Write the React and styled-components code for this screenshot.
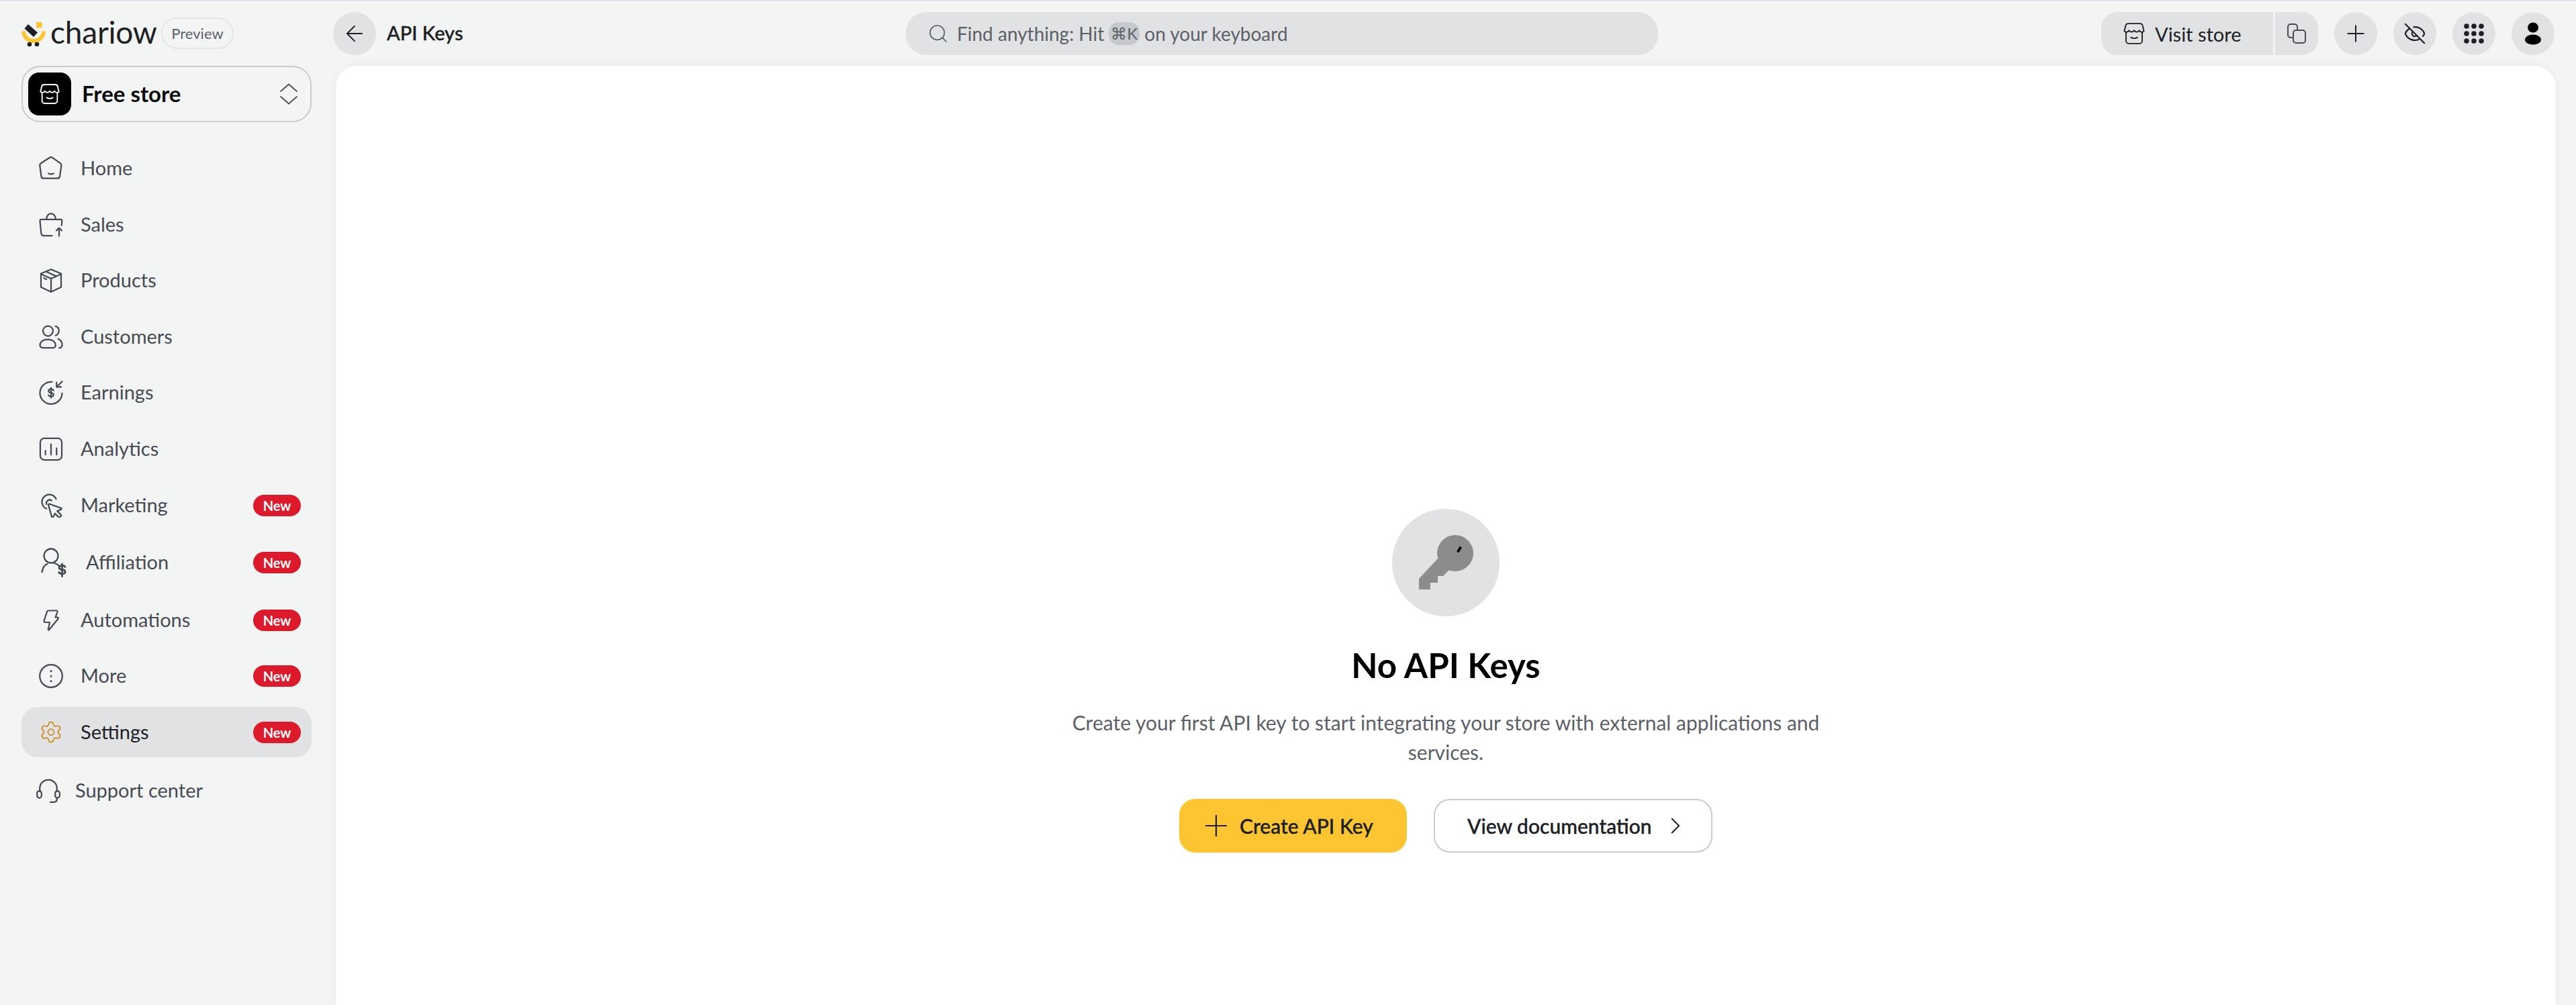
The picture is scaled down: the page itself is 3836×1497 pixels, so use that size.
import styled, { createGlobalStyle } from 'styled-components'
import { ArrowLeft, ChevronRight, EyeOff, Plus, Search, Settings } from 'lucide-react'

const FONT = `Lato, "Noto Sans", sans-serif`

const GlobalStyle = createGlobalStyle`
  * { box-sizing: border-box; }
  html, body { margin: 0; padding: 0; height: 100%; overflow: hidden; }
  body { background: #f3f5f4; font-family: ${FONT}; }
`

const Line = ({ w = 24, h = 24, children, ...rest }) => (
  <svg
    width={w}
    height={h}
    viewBox={`0 0 ${w} ${h}`}
    fill="none"
    stroke="currentColor"
    strokeWidth="1.5"
    strokeLinecap="round"
    strokeLinejoin="round"
    {...rest}
  >
    {children}
  </svg>
)

const Box = ({ children, ...rest }) => (
  <svg
    width="36"
    height="36"
    viewBox="0 0 24 24"
    fill="none"
    stroke="currentColor"
    strokeWidth="1.5"
    strokeLinecap="round"
    strokeLinejoin="round"
    {...rest}
  >
    {children}
  </svg>
)

const HomeIcon = () => (
  <Box>
    <path d="M10.6 1.2a2.4 2.4 0 0 1 2.8 0l7.8 5.6a2.4 2.4 0 0 1 1 2.4l-1.5 10.6a2.4 2.4 0 0 1-2.4 2H4.7a2.4 2.4 0 0 1-2.4-2L.9 9.2a2.4 2.4 0 0 1 1-2.4Z" />
    <path d="M9.5 17c1.5.7 3.5.7 5 0" />
  </Box>
)

const SalesIcon = () => (
  <Box>
    <path d="M7.5 6.5C7.5 3 9.5.8 12 .8s4.5 2.2 4.5 5.7" />
    <path d="M13 22.8H5c-1.5 0-2.6-1-2.8-2.5L1 8c0-.9.7-1.5 1.5-1.5h19c.8 0 1.5.6 1.4 1.5l-.4 4.5" />
    <path d="M20 23v-8m-2.6 2.6L20 15l2.6 2.6" />
  </Box>
)

const ProductsIcon = () => (
  <Box>
    <path d="M12 .8 22 5v13.5l-10 4.7-10-4.7V5Z" />
    <path d="M2 5.5 12 10l10-4.5M12 10v13" />
    <path d="M7 3 17 7.5M5 9.5l2.5 1.2" />
  </Box>
)

const CustomersIcon = () => (
  <Box>
    <circle cx="9" cy="6" r="5" />
    <path d="M16.5 1.3c2 .6 3.3 2.4 3.3 4.5s-1.3 3.9-3.3 4.7" />
    <path d="M5 22.8h8.5c2 0 3-1.2 3-2.8 0-3.4-3.4-5.6-7.7-5.6S1 16.6 1 20c0 1.6 1.5 2.8 4 2.8Z" />
    <path d="M19 13.8c2.5 1 4 3.2 4 6 0 1.8-1.2 3-3 3" />
  </Box>
)

const EarningsIcon = () => (
  <Box>
    <path d="M13 1.3A11 11 0 1 0 23 12.5" />
    <path d="M23 .8 17.5 6.3M17.5 1.8v4.5H22" />
    <path d="M14.5 9.8c-.4-.9-1.3-1.4-2.5-1.4-1.5 0-2.5.8-2.5 1.8s1 1.7 2.5 1.9 2.5.9 2.5 1.9-1 1.8-2.5 1.8c-1.2 0-2.1-.5-2.5-1.4M12 7v10" />
  </Box>
)

const AnalyticsIcon = () => (
  <Box>
    <rect x="1.3" y="1.3" width="21.4" height="21.4" rx="4" />
    <path d="M6.5 13.5v4M12 7v10.5M17.5 11v6.5" />
  </Box>
)

const MarketingIcon = () => (
  <Box>
    <path d="M7.5 15.2A7.3 7.3 0 1 1 17 5.5" />
    <path d="M7.5 10.8A3.3 3.3 0 0 1 12.5 7" />
    <path d="M10.5 10.5 22 14.6c.6.2.6 1 0 1.3l-3.8 1.7 3.5 3.5c.4.4.4.9 0 1.3l-1 1c-.4.4-.9.4-1.3 0l-3.5-3.5-1.8 3.6c-.3.6-1.1.5-1.3-.1L9.4 11.6c-.2-.7.4-1.3 1.1-1.1Z" />
  </Box>
)

const AffiliationIcon = () => (
  <Line w={40} h={44} strokeWidth="2.3">
    <circle cx="16" cy="12" r="10.5" />
    <path d="M2.5 36c1-6 3.8-10.3 8-12M21 23c2 .5 4 1.4 6 3" />
    <path d="M37 28.5c-.6-1.3-2.2-2-4.500-2-2.800 0-4.500 1.100-4.500 2.900s1.800 2.700 4.500 3.100 4.700 1.300 4.700 3.200-2 3-4.700 3c-2.400 0-4-.8-4.700-2.200M32.500 24v18.500" strokeWidth="2.8" />
  </Line>
)

const AutomationsIcon = () => (
  <Line w={24} h={32} strokeWidth="2.2">
    <path d="M8.500 1.500H20c1.300 0 1.900 1 1.500 2.200L18.500 11.500h3c1.300 0 1.800 1.200 1 2.200L9.300 30c-.7.8-1.700.2-1.500-.7L10 19H3.500C2 19 1.200 18 1.600 16.600L6 3.200C6.400 2.100 7.200 1.500 8.500 1.500Z" />
  </Line>
)

const MoreIcon = () => (
  <Box>
    <circle cx="12" cy="12" r="11.2" />
    <path d="M12 7v.1M12 12v.1M12 17v.1" strokeWidth="2" />
  </Box>
)

const SupportIcon = () => (
  <Box>
    <path d="M3.5 12.5V9.5a8.5 8.5 0 0 1 17 0v3" />
    <rect x=".8" y="12" width="4.4" height="7" rx="2.2" />
    <rect x="18.8" y="12" width="4.4" height="7" rx="2.2" />
    <path d="M20.5 19v1c0 2-1.3 3.2-3.2 3.2H14" />
  </Box>
)

const StoreIcon = ({ size = 32, sw = 1.4 }) => (
  <svg width={size} height={size} viewBox="0 0 24 24" fill="none" stroke="currentColor" strokeWidth={sw} strokeLinecap="round" strokeLinejoin="round">
    <path d="M3.5 11v8.5a3 3 0 0 0 3 3h11a3 3 0 0 0 3-3V11" />
    <path d="M6 1.500h12a3 3 0 0 1 3 2.500l1.300 5.500c-1.500 1.500-3.800 1.200-5-.8-1 2-4 2.200-5.300 0-1.300 2.200-4.300 2-5.300 0-1.200 2-3.500 2.300-5 .8L3 4a3 3 0 0 1 3-2.500Z" />
    <path d="M8.5 16c2.200 1.300 4.800 1.300 7 0" />
  </svg>
)

const LogoMark = () => (
  <svg width="36" height="42" viewBox="0 0 36 42">
    <path d="M3 17.5a15 14.5 0 0 0 30 0" fill="none" stroke="#fec532" strokeWidth="6" />
    <rect x="22" y="4" width="8.5" height="8.5" fill="#fec532" />
    <path d="M9.5 7.500 10 7.300 24 19.500 18 26 4.500 13.500Z" fill="#1d1f24" />
    <circle cx="12" cy="37" r="3.3" fill="#1d1f24" />
    <circle cx="23" cy="37" r="3.3" fill="#1d1f24" />
  </svg>
)

const KeyIcon = () => (
  <svg width="160" height="160" viewBox="0 0 160 160">
    <circle cx="94" cy="66" r="27" fill="#8c8c8c" />
    <path d="M68 74 40 104v16h17v-10h11v-10h8l12-12Z" fill="#8c8c8c" />
    <path d="M98.5 63l3-5" stroke="#000" strokeWidth="4" strokeLinecap="round" />
  </svg>
)

const Page = styled.div`
  display: grid;
  grid-template-columns: 496px 1fr;
  height: 100vh;
  border-top: 2px solid #e2e3ee;
  overflow: hidden;
`

const Sidebar = styled.aside`
  padding: 24px 32px 0;
  display: flex;
  flex-direction: column;
`

const Brand = styled.div`
  height: 47px;
  display: flex;
  align-items: center;
  gap: 7px;
  margin-bottom: 25px;
`

const Wordmark = styled.span`
  font-size: 46px;
  line-height: 47px;
  color: #1d1f24;
  letter-spacing: -0.2px;
  width: 158px;
  margin-top: -4px;
`

const PreviewPill = styled.span`
  width: 108px;
  height: 47px;
  border: 2px solid #e4e5e7;
  border-radius: 24px;
  display: flex;
  align-items: center;
  justify-content: center;
  font-size: 22px;
  color: #5c6068;
`

const StoreSelect = styled.div`
  height: 84px;
  border: 2px solid #c8cad0;
  border-radius: 28px;
  padding: 0 18px 0 8px;
  display: flex;
  align-items: center;
  color: #4b4e55;
`

const StoreBadge = styled.div`
  width: 64px;
  height: 64px;
  border-radius: 16px;
  background: #000;
  color: #fff;
  display: flex;
  align-items: center;
  justify-content: center;
  flex: none;
`

const StoreName = styled.span`
  flex: 1;
  margin: -3px 0 0 16px;
  font-size: 33px;
  font-weight: 700;
  color: #0a0a0a;
`

const Nav = styled.nav`
  display: flex;
  flex-direction: column;
  gap: 8.6px;
  margin-top: 31.5px;
`

const NavRow = styled.a`
  height: ${p => p.$height || 75}px;
  padding: 0 16px 0 ${p => p.$inset || 26}px;
  border-radius: 24px;
  display: flex;
  align-items: center;
  background: ${p => (p.$active ? '#e1e2e4' : 'transparent')};
  color: ${p => (p.$active ? '#1d1f24' : '#474a52')};
  font-size: 29px;
`

const NavIcon = styled.span`
  width: ${p => p.$width || 36}px;
  margin-right: ${p => p.$space ?? 26}px;
  display: flex;
  justify-content: center;
  flex: none;
  color: ${p => p.$color || '#474a52'};
`

const NavLabel = styled.span`
  flex: 1;
  margin-top: -3px;
`

const NewBadge = styled.span`
  width: 71px;
  height: 32px;
  border-radius: 16px;
  background: #dc1a2c;
  color: #fff;
  font-size: 20px;
  font-weight: 700;
  display: flex;
  align-items: center;
  justify-content: center;
`

const Main = styled.main`
  display: flex;
  flex-direction: column;
  min-width: 0;
`

const Header = styled.header`
  display: grid;
  grid-template-columns: 853px 1120px 1fr;
  align-items: center;
  height: 64px;
  margin: 16px 32px 16px 0;
  flex: none;
`

const HeaderLeft = styled.div`
  display: flex;
  align-items: center;
  gap: 16px;
`

const RoundButton = styled.button`
  width: 64px;
  height: 64px;
  border: 0;
  padding: 0;
  border-radius: 50%;
  background: #e1e2e4;
  color: #1d1f24;
  display: flex;
  align-items: center;
  justify-content: center;
  flex: none;
`

const PageTitle = styled.h1`
  margin: -3px 0 0;
  font-size: 29px;
  font-weight: 500;
  -webkit-text-stroke: 0.4px #1d1f24;
  color: #1d1f24;
`

const SearchBar = styled.div`
  height: 64px;
  border-radius: 30px;
  background: #e1e2e4;
  padding: 0 32px;
  display: flex;
  align-items: center;
  color: #5c6068;
  font-size: 28px;
`

const SearchText = styled.span`
  margin-left: 12px;
`

const Kbd = styled.kbd`
  width: 46px;
  height: 34px;
  margin: 0 7px;
  border-radius: 15px;
  background: #c6c9ce;
  display: inline-flex;
  align-items: center;
  justify-content: center;
  font-family: ${FONT};
  font-size: 24px;
`

const HeaderRight = styled.div`
  display: flex;
  justify-content: flex-end;
  align-items: center;
  gap: 24px;
`

const VisitGroup = styled.div`
  display: flex;
  gap: 3px;
`

const VisitButton = styled.div`
  width: 256px;
  height: 64px;
  border-radius: 24px 0 0 24px;
  background: #e1e2e4;
  padding-left: 32px;
  display: flex;
  align-items: center;
  gap: 14px;
  color: #1d1f24;
  font-size: 29px;
`

const CopyButton = styled.div`
  width: 64px;
  height: 64px;
  border-radius: 0 24px 24px 0;
  background: #e1e2e4;
  color: #474a52;
  display: flex;
  align-items: center;
  justify-content: center;
`

const Panel = styled.section`
  flex: 1;
  margin: 0 30px 0 4px;
  border-radius: 32px 32px 0 0;
  background: #fff;
  box-shadow: 0 0 14px rgba(0, 0, 0, 0.05);
  padding-top: 660px;
  display: flex;
  flex-direction: column;
  align-items: center;
`

const EmptyIcon = styled.div`
  width: 160px;
  height: 160px;
  border-radius: 50%;
  background: #e1e2e4;
`

const EmptyTitle = styled.h2`
  margin: 38px 0 0;
  font-size: 51px;
  line-height: 70px;
  font-weight: 700;
  color: #000;
`

const EmptyText = styled.p`
  margin: 28px 0 0;
  width: 1180px;
  font-size: 30px;
  line-height: 44px;
  text-align: center;
  color: #5c6068;
`

const Actions = styled.div`
  display: flex;
  gap: 40px;
  margin-top: 48px;
`

const PrimaryButton = styled.button`
  width: 339px;
  height: 80px;
  border: 0;
  padding: 0 0 0 29px;
  border-radius: 24px;
  background: #fec532;
  color: #1d1f24;
  font-family: ${FONT};
  font-size: 30px;
  font-weight: 500;
  -webkit-text-stroke: 0.4px #1d1f24;
  display: flex;
  align-items: center;
  gap: 9px;
`

const GhostButton = styled.button`
  width: 415px;
  height: 80px;
  border: 2px solid #c8ccd2;
  padding: 0 0 0 48px;
  border-radius: 24px;
  background: #fff;
  color: #1d1f24;
  font-family: ${FONT};
  font-size: 30px;
  font-weight: 500;
  -webkit-text-stroke: 0.4px #1d1f24;
  display: flex;
  align-items: center;
  gap: 14px;
`

const navItems = [
  { label: 'Home', icon: <HomeIcon /> },
  { label: 'Sales', icon: <SalesIcon /> },
  { label: 'Products', icon: <ProductsIcon /> },
  { label: 'Customers', icon: <CustomersIcon /> },
  { label: 'Earnings', icon: <EarningsIcon /> },
  { label: 'Analytics', icon: <AnalyticsIcon /> },
  { label: 'Marketing', icon: <MarketingIcon />, isNew: true },
  { label: 'Affiliation', icon: <AffiliationIcon />, isNew: true, height: 79, inset: 28, width: 40, space: 28 },
  { label: 'Automations', icon: <AutomationsIcon />, isNew: true },
  { label: 'More', icon: <MoreIcon />, isNew: true },
  { label: 'Settings', icon: <Settings size={43} strokeWidth={1.25} />, isNew: true, active: true, color: '#cf9230' },
  { label: 'Support center', icon: <SupportIcon />, height: 82, inset: 22, space: 22 },
]

export default function App() {
  return (
    <>
      <GlobalStyle />
      <Page>
        <Sidebar>
          <Brand>
            <LogoMark />
            <Wordmark>chariow</Wordmark>
            <PreviewPill>Preview</PreviewPill>
          </Brand>
          <StoreSelect>
            <StoreBadge>
              <StoreIcon />
            </StoreBadge>
            <StoreName>Free store</StoreName>
            <Line w={28} h={32} strokeWidth="1.8">
              <path d="M2 12 14 1.5 26 12M2 20l12 10.5L26 20" />
            </Line>
          </StoreSelect>
          <Nav>
            {navItems.map(item => (
              <NavRow key={item.label} $active={item.active} $height={item.height} $inset={item.inset}>
                <NavIcon $width={item.width} $space={item.space} $color={item.color}>
                  {item.icon}
                </NavIcon>
                <NavLabel>{item.label}</NavLabel>
                {item.isNew && <NewBadge>New</NewBadge>}
              </NavRow>
            ))}
          </Nav>
        </Sidebar>
        <Main>
          <Header>
            <HeaderLeft>
              <RoundButton>
                <ArrowLeft size={38} strokeWidth={1.2} />
              </RoundButton>
              <PageTitle>API Keys</PageTitle>
            </HeaderLeft>
            <SearchBar>
              <Search size={32} strokeWidth={1.3} />
              <SearchText>Find anything: Hit</SearchText>
              <Kbd>⌘K</Kbd>
              <span>on your keyboard</span>
            </SearchBar>
            <HeaderRight>
              <VisitGroup>
                <VisitButton>
                  <StoreIcon size={34} sw={1.3} />
                  Visit store
                </VisitButton>
                <CopyButton>
                  <Line w={32} h={32} strokeWidth="2">
                    <path d="M9 22H7a4 4 0 0 1-4-4V6a4 4 0 0 1 4-4h6a4 4 0 0 1 4 4v3" />
                    <rect x="11" y="11" width="18" height="19" rx="4" />
                  </Line>
                </CopyButton>
              </VisitGroup>
              <RoundButton>
                <Plus size={40} strokeWidth={1.2} />
              </RoundButton>
              <RoundButton>
                <EyeOff size={34} strokeWidth={1.5} />
              </RoundButton>
              <RoundButton>
                <svg width="30" height="30" viewBox="0 0 30 30" fill="#1d1f24">
                  {[4, 15, 26].flatMap(y =>
                    [4, 15, 26].map(x => <circle key={`${x}-${y}`} cx={x} cy={y} r="3.8" />),
                  )}
                </svg>
              </RoundButton>
              <RoundButton>
                <svg width="24" height="34" viewBox="0 0 24 34" fill="#000">
                  <ellipse cx="12" cy="8" rx="8" ry="7.5" />
                  <ellipse cx="12" cy="26" rx="12" ry="7.5" />
                </svg>
              </RoundButton>
            </HeaderRight>
          </Header>
          <Panel>
            <EmptyIcon>
              <KeyIcon />
            </EmptyIcon>
            <EmptyTitle>No API Keys</EmptyTitle>
            <EmptyText>
              Create your first API key to start integrating your store with external applications and services.
            </EmptyText>
            <Actions>
              <PrimaryButton>
                <Plus size={52} strokeWidth={1} />
                Create API Key
              </PrimaryButton>
              <GhostButton>
                View documentation
                <ChevronRight size={42} strokeWidth={1.1} />
              </GhostButton>
            </Actions>
          </Panel>
        </Main>
      </Page>
    </>
  )
}
